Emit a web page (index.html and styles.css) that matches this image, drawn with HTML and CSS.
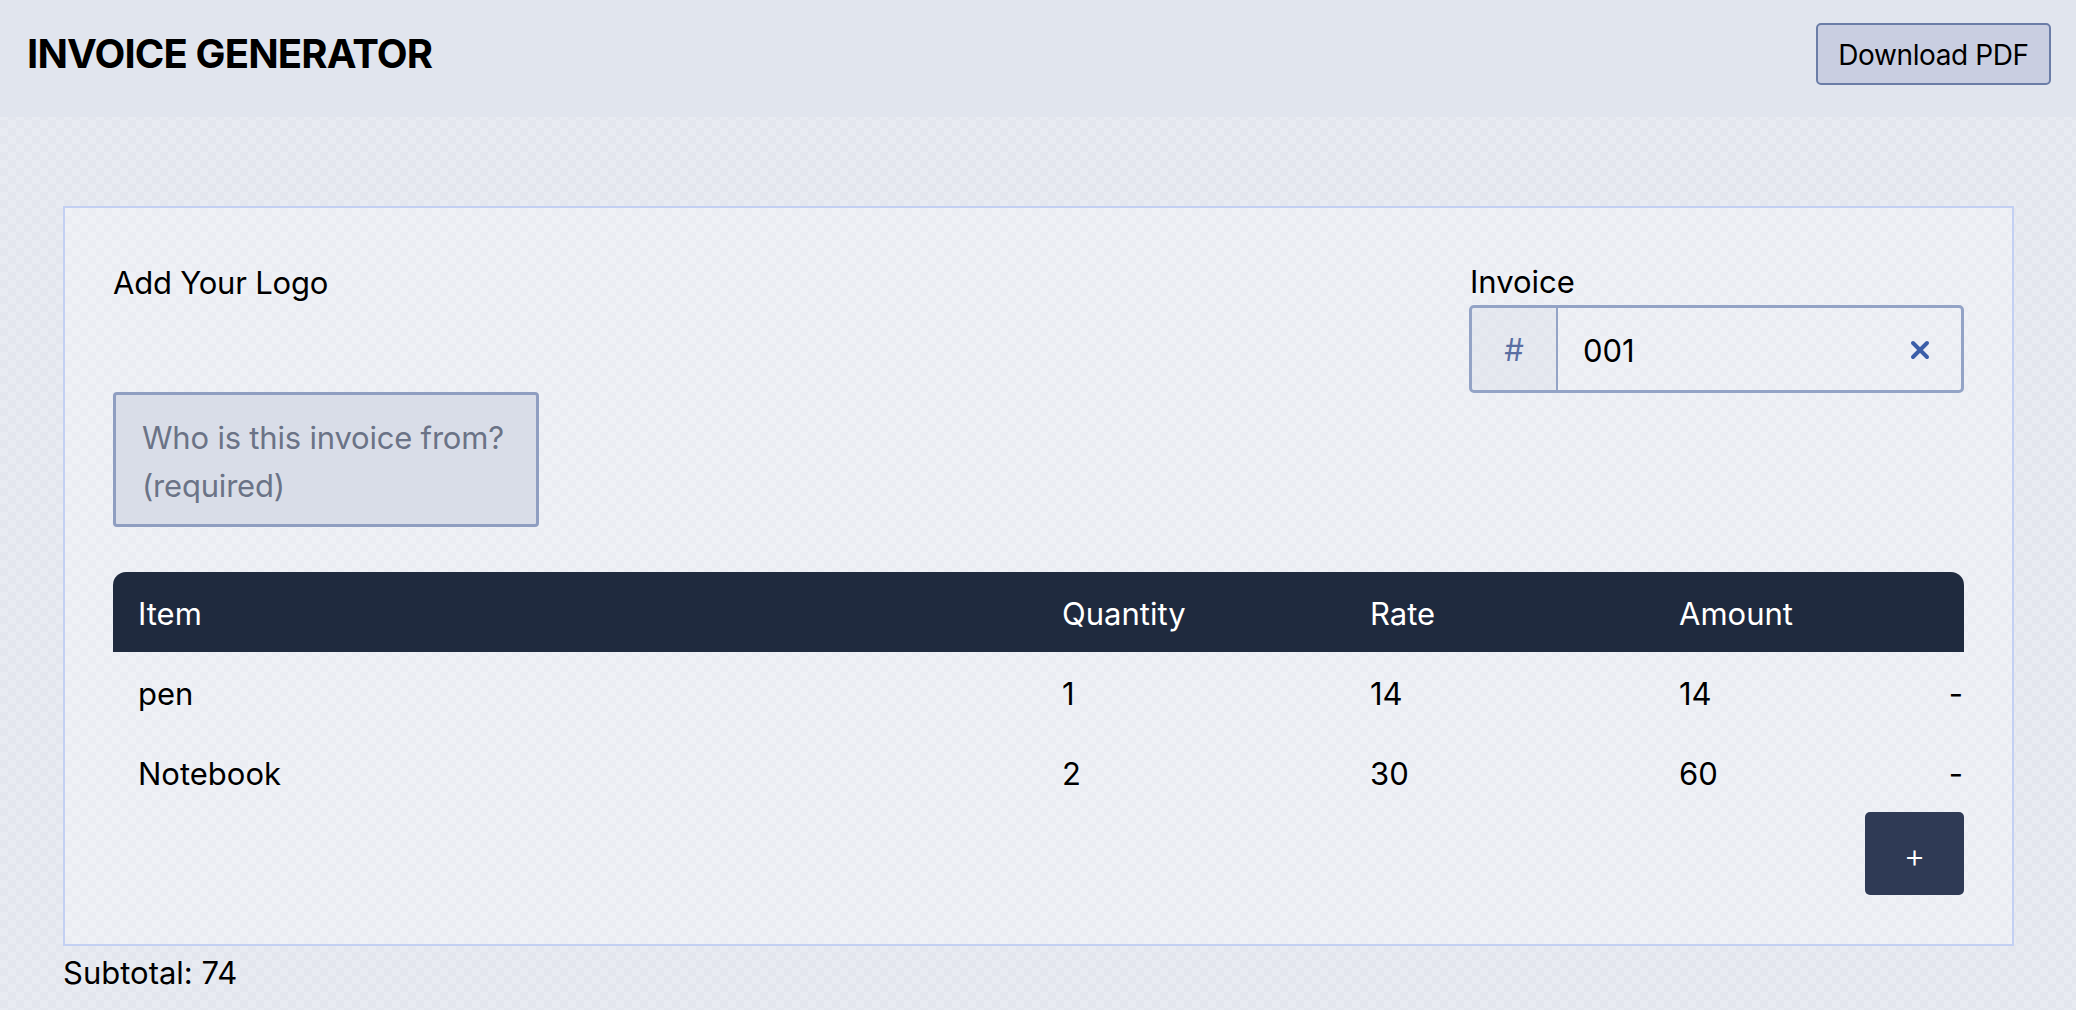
FILE: index.html
```html
<!DOCTYPE html>
<html lang="en">
<head>
<meta charset="utf-8">
<title>Invoice Generator</title>
<link rel="stylesheet" href="styles.css">
</head>
<body>
<header class="topbar">
  <h1 class="title">INVOICE GENERATOR</h1>
  <button class="download-btn" type="button">Download PDF</button>
</header>
<main class="page">
  <section class="card">
    <div class="top-row">
      <div class="from-col">
        <div class="logo-area">Add Your Logo</div>
        <textarea class="from-input" placeholder="Who is this invoice from? (required)"></textarea>
      </div>
      <div class="invoice-col">
        <label class="invoice-label">Invoice</label>
        <div class="invoice-group">
          <span class="invoice-prefix">#</span>
          <input class="invoice-input" type="text" value="001">
          <span class="invoice-clear">
            <svg width="22" height="22" viewBox="0 0 22 22" aria-hidden="true">
              <path d="M4 4 L18 18 M18 4 L4 18" stroke="#3b5ea8" stroke-width="4" stroke-linecap="round" fill="none"/>
            </svg>
          </span>
        </div>
      </div>
    </div>

    <div class="items">
      <div class="row head">
        <div class="cell">Item</div>
        <div class="cell">Quantity</div>
        <div class="cell">Rate</div>
        <div class="cell">Amount</div>
        <div class="cell"></div>
      </div>
      <div class="row">
        <div class="cell">pen</div>
        <div class="cell">1</div>
        <div class="cell">14</div>
        <div class="cell">14</div>
        <div class="cell"><button class="remove-btn" type="button">-</button></div>
      </div>
      <div class="row">
        <div class="cell">Notebook</div>
        <div class="cell">2</div>
        <div class="cell">30</div>
        <div class="cell">60</div>
        <div class="cell"><button class="remove-btn" type="button">-</button></div>
      </div>
      <div class="add-row">
        <button class="add-btn" type="button">+</button>
      </div>
    </div>
  </section>
  <p class="subtotal">Subtotal: 74</p>
</main>
</body>
</html>
```

FILE: styles.css
```css
html {
  background-color: #e8ebf2;
  background-image: conic-gradient(#e3e6ee 25%, transparent 0 50%, #e3e6ee 0 75%, transparent 0);
  background-size: 16px 16px;
  min-height: 100%;
}

body {
  margin: 0;
  font-family: Inter, "Noto Sans", sans-serif;
  font-size: 31px;
  line-height: 46.5px;
  color: #000;
}

.topbar {
  height: 117px;
  box-sizing: border-box;
  display: flex;
  align-items: center;
  justify-content: space-between;
  padding: 0 25px 9px 27px;
  background: #e1e5ee;
}

.title {
  margin: 0;
  font-size: 40px;
  font-weight: 700;
  letter-spacing: -0.85px;
  line-height: 1;
}

.download-btn {
  width: 235px;
  height: 62px;
  border: 2px solid #6b7da7;
  border-radius: 5px;
  background: #c9cee1;
  font-family: Inter, "Noto Sans", sans-serif;
  font-size: 28px;
  letter-spacing: -0.4px;
  color: #000;
  padding: 2px 0 0;
}

.page {
  padding: 89px 62px 0 63px;
}

.card {
  border: 2px solid #c3d0f3;
  background: rgba(255, 255, 255, 0.3);
  padding: 50px 48px 49px;
}

.top-row {
  display: flex;
  justify-content: space-between;
  align-items: flex-start;
}

.from-col {
  display: flex;
  flex-direction: column;
}

.logo-area {
  height: 134px;
  box-sizing: border-box;
  padding-top: 2px;
  letter-spacing: -0.2px;
}

.from-input {
  display: block;
  width: 426px;
  height: 135px;
  box-sizing: border-box;
  margin: 0;
  padding: 19px 24px 14px 26px;
  border: 3px solid #8f9ec1;
  border-radius: 4px;
  background: #d9dde8;
  font-family: Inter, "Noto Sans", sans-serif;
  font-size: 31px;
  line-height: 48px;
  letter-spacing: -0.2px;
  color: #000;
  resize: none;
  overflow: hidden;
  outline: none;
}

.from-input::placeholder {
  color: #6b7386;
  opacity: 1;
}

.invoice-col {
  width: 495px;
  display: flex;
  flex-direction: column;
}

.invoice-label {
  display: block;
  padding: 2px 0 0 1px;
  line-height: 44.5px;
}

.invoice-group {
  display: flex;
  align-items: stretch;
  height: 88px;
  box-sizing: border-box;
  border: 3px solid #93a3c6;
  border-radius: 5px;
}

.invoice-prefix {
  width: 86px;
  flex: none;
  display: flex;
  align-items: center;
  justify-content: center;
  padding-top: 3px;
  box-sizing: border-box;
  border-right: 2px solid #93a3c6;
  background: rgba(205, 210, 225, 0.25);
  color: #5a6ea2;
}

.invoice-input {
  flex: 1;
  min-width: 0;
  border: 0;
  background: transparent;
  padding: 4px 0 0 25px;
  font-family: Inter, "Noto Sans", sans-serif;
  font-size: 31px;
  color: #000;
  outline: none;
}

.invoice-clear {
  display: flex;
  align-items: center;
  padding: 2px 30px 0 10px;
}

.items {
  margin-top: 45px;
}

.row {
  display: grid;
  grid-template-columns: 931px 308px 309px 1fr auto;
  height: 80px;
  align-items: center;
}

.row.head {
  background: #1f2a3e;
  color: #fff;
  border-radius: 13px 13px 0 0;
}

.cell {
  padding: 5px 0 0 18px;
}

.cell:first-child {
  padding-left: 25px;
}

.cell:last-child {
  padding-left: 0;
}

.remove-btn {
  border: 0;
  background: none;
  padding: 0 1px 0 0;
  font-family: Inter, "Noto Sans", sans-serif;
  font-size: 31px;
  line-height: 46.5px;
  color: #000;
}

.add-row {
  display: flex;
  justify-content: flex-end;
}

.add-btn {
  width: 99px;
  height: 83px;
  border: 0;
  border-radius: 5px;
  background: #2f3a55;
  color: #fff;
  font-family: Inter, "Noto Sans", sans-serif;
  font-size: 33px;
  font-weight: 300;
  padding: 2px 0 0;
}

.subtotal {
  margin: 0;
  padding-top: 4px;
}
```
